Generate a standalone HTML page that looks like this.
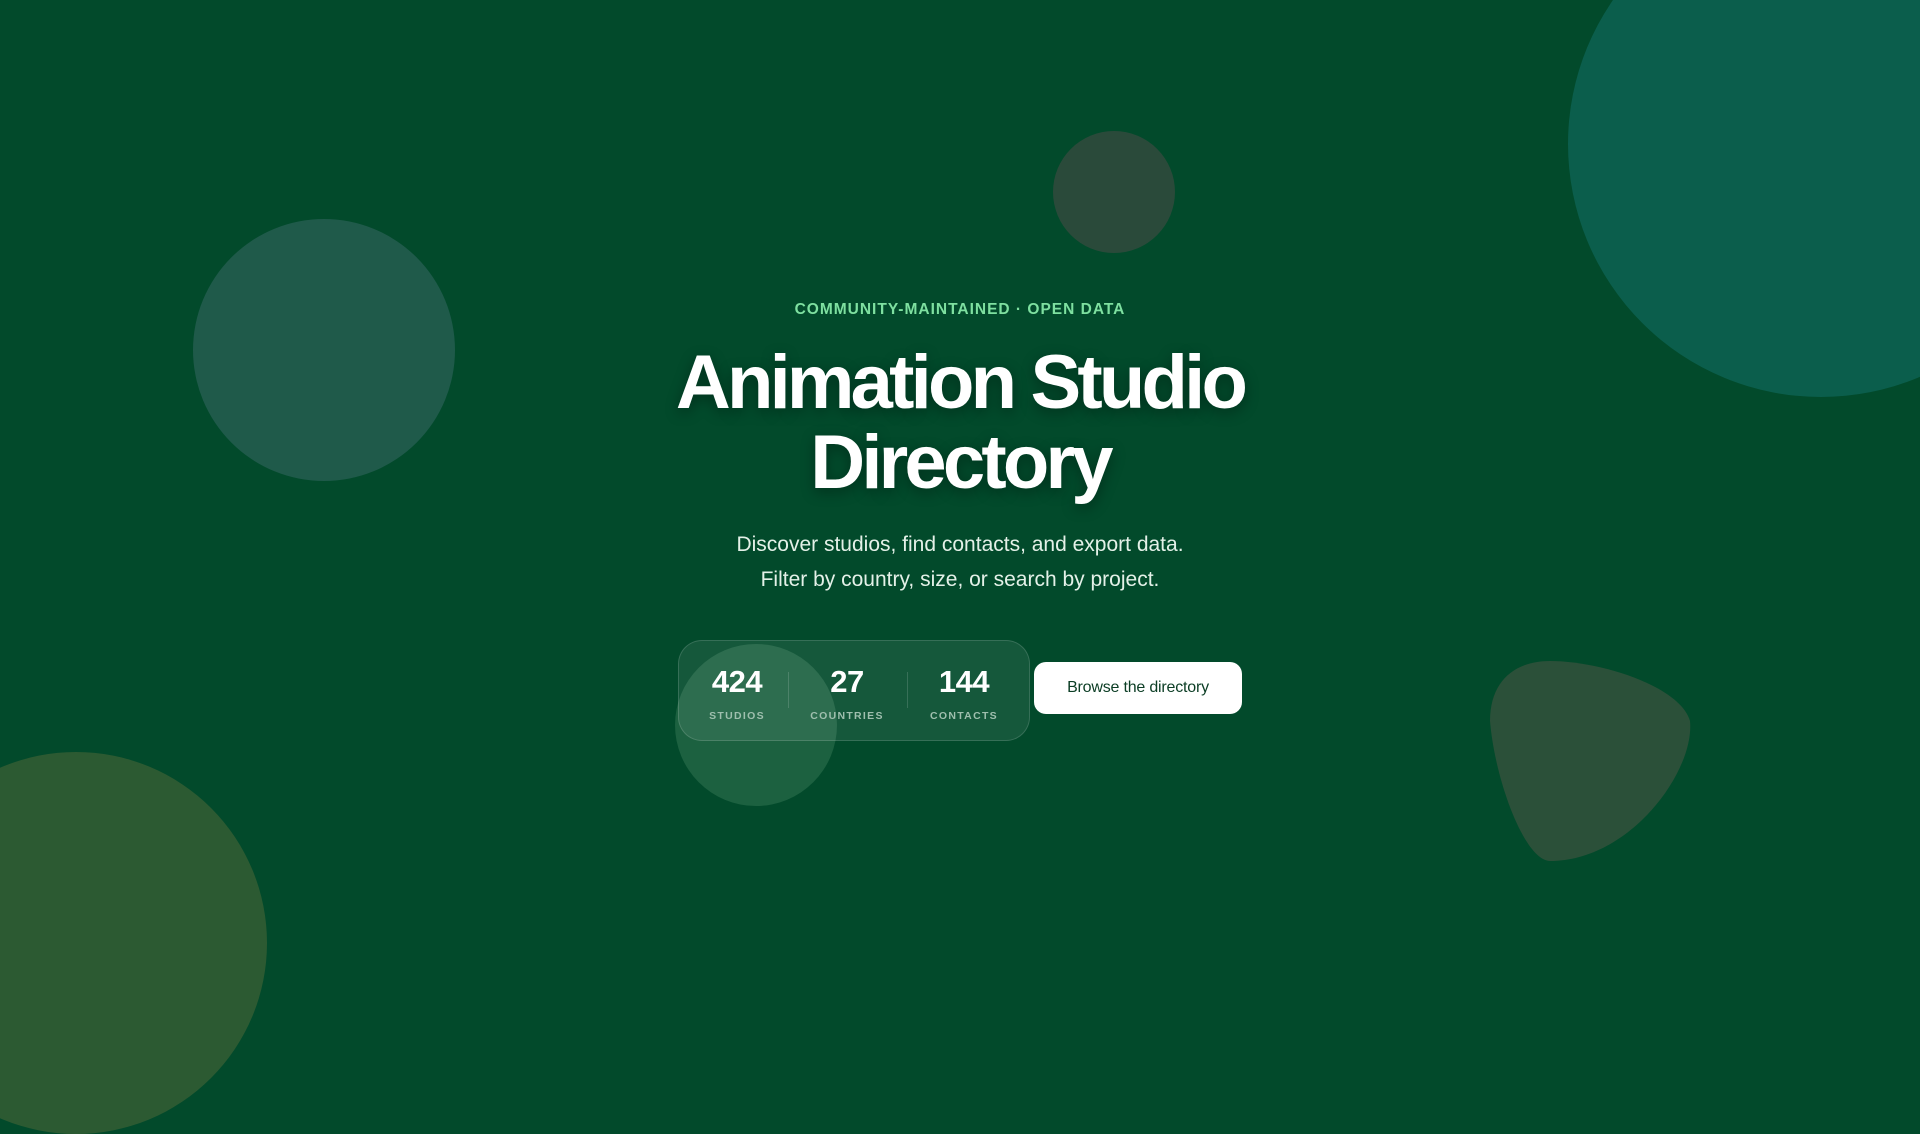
<!DOCTYPE html>
<html><head><meta charset="utf-8"><style>
html,body{margin:0;padding:0;width:1920px;height:1080px;overflow:hidden;background:#024a2b;font-family:"Liberation Sans",Arial,sans-serif;}
.c{position:absolute;border-radius:50%;}
.t{position:absolute;left:0;width:1920px;text-align:center;}
.n{position:absolute;width:120px;text-align:center;color:#fff;font-weight:bold;font-size:31px;letter-spacing:-0.5px}
.l{position:absolute;width:120px;text-align:center;color:#9fbfae;font-weight:bold;font-size:10.5px;letter-spacing:1.3px}
</style></head><body>
<div class="c" style="left:1053px;top:131px;width:122px;height:122px;background:#2a4a3a"></div>
<div class="c" style="left:193px;top:219px;width:262px;height:262px;background:#1f5a4a"></div>
<div class="c" style="left:1568px;top:-109px;width:506px;height:506px;background:#0b5e4c"></div>
<div class="c" style="left:-115px;top:752px;width:382px;height:382px;background:#2c5a32"></div>
<svg style="position:absolute;left:1490px;top:661px" width="202" height="202" viewBox="0 0 202 202"><path d="M60,0 C110,0 190,25 200,60 C205,110 140,200 60,200 C35,200 5,120 0,60 C0,20 25,0 60,0Z" fill="#2b5039"/></svg>
<div class="c" style="left:675px;top:644px;width:162px;height:162px;background:#1c6140"></div>
<div class="t" style="top:301px;font-size:15.5px;font-weight:bold;letter-spacing:1px;color:#7ee0a0">COMMUNITY-MAINTAINED · OPEN DATA</div>
<div class="t" style="top:343px;font-size:76px;line-height:80px;font-weight:bold;letter-spacing:-3.8px;color:#fff;text-shadow:0 4px 14px rgba(0,0,0,.35)">Animation Studio<br>Directory</div>
<div class="t" style="top:527px;font-size:21px;line-height:35px;color:#e4f1e8">Discover studios, find contacts, and export data.<br>Filter by country, size, or search by project.</div>
<div style="position:absolute;left:678px;top:640px;width:350px;height:99px;border-radius:24px;background:rgba(255,255,255,.08);border:1px solid rgba(255,255,255,.14)"></div>
<div style="position:absolute;left:788px;top:672px;width:1px;height:36px;background:rgba(255,255,255,.15)"></div>
<div style="position:absolute;left:907px;top:672px;width:1px;height:36px;background:rgba(255,255,255,.15)"></div>
<div class="n" style="left:677px;top:664px">424</div>
<div class="n" style="left:787px;top:664px">27</div>
<div class="n" style="left:904px;top:664px">144</div>
<div class="l" style="left:677px;top:710px">STUDIOS</div>
<div class="l" style="left:787px;top:710px">COUNTRIES</div>
<div class="l" style="left:904px;top:710px">CONTACTS</div>
<div style="position:absolute;left:1034px;top:662px;width:208px;height:52px;border-radius:12px;background:#fff;color:#0b3d24;font-size:16px;line-height:52px;text-align:center;letter-spacing:-0.2px">Browse the directory</div>
</body></html>
